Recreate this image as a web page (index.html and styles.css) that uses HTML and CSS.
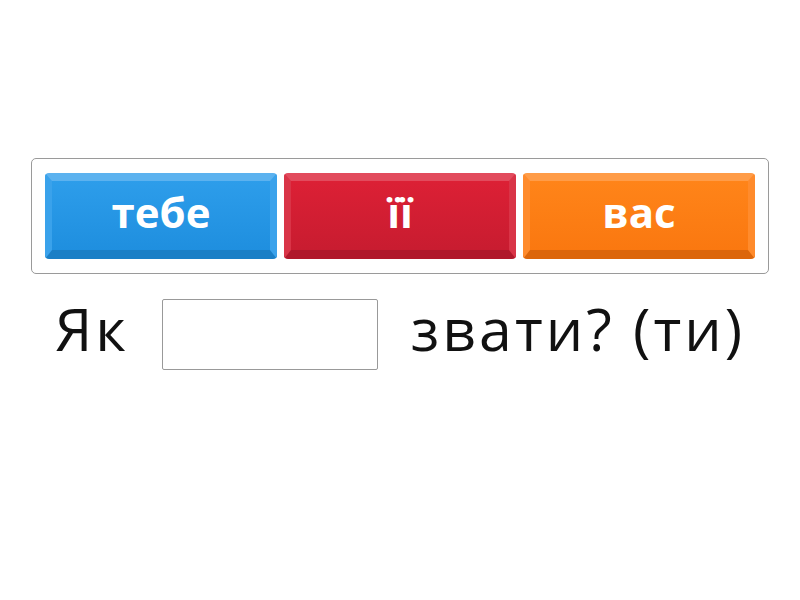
FILE: index.html
```
<!DOCTYPE html>
<html lang="uk">
<head>
    <meta charset="UTF-8">
    <meta name="viewport" content="width=device-width, initial-scale=1.0">
    <title>Як тебе звати?</title>
    <link rel="stylesheet" href="styles.css">
</head>
<body>
    <div class="stage">
        <div class="options">
            <div class="tile blue">тебе</div>
            <div class="tile red">її</div>
            <div class="tile orange">вас</div>
        </div>
        <div class="sentence">
            <span class="word">Як</span>
            <div class="gap-box"></div>
            <span class="word">звати? (ти)</span>
        </div>
    </div>
</body>
</html>
```

FILE: styles.css
```
body {
    margin: 0;
    font-family: "Open Sans", "Noto Sans", sans-serif;
    background-color: #fff;
}
.stage {
    padding-top: 158px;
}
.options {
    width: 710px;
    margin: 0 auto;
    padding: 14px 13px;
    border: 1px solid #9a9a9a;
    border-radius: 5px;
    display: flex;
    gap: 7px;
}
.tile {
    box-sizing: border-box;
    width: 232px;
    height: 86px;
    padding-bottom: 8px;
    border-style: solid;
    border-width: 8px 7px 9px 7px;
    border-radius: 4px;
    display: flex;
    align-items: center;
    justify-content: center;
    color: #fff;
    font-size: 42px;
    font-weight: 700;
}
.blue {
    background: linear-gradient(#2d9dea, #1f8fdf);
    border-color: #5cb2ef #3aa2eb #1b7fc6 #3aa2eb;
}
.red {
    background: linear-gradient(#dc2035, #c81c30);
    border-color: #e24b5d #d93447 #b0182b #d93447;
}
.orange {
    background: linear-gradient(#ff8419, #fa7810);
    border-color: #ff9c48 #ff8b2c #dc660a #ff8b2c;
}
.sentence {
    margin-top: 25px;
    display: flex;
    justify-content: center;
    align-items: flex-start;
    gap: 33px;
}
.word {
    font-size: 59px;
    letter-spacing: 3px;
    color: #111;
    line-height: 1;
}
.gap-box {
    box-sizing: border-box;
    width: 216px;
    height: 71px;
    border: 1px solid #999;
    border-radius: 2px;
}
```
